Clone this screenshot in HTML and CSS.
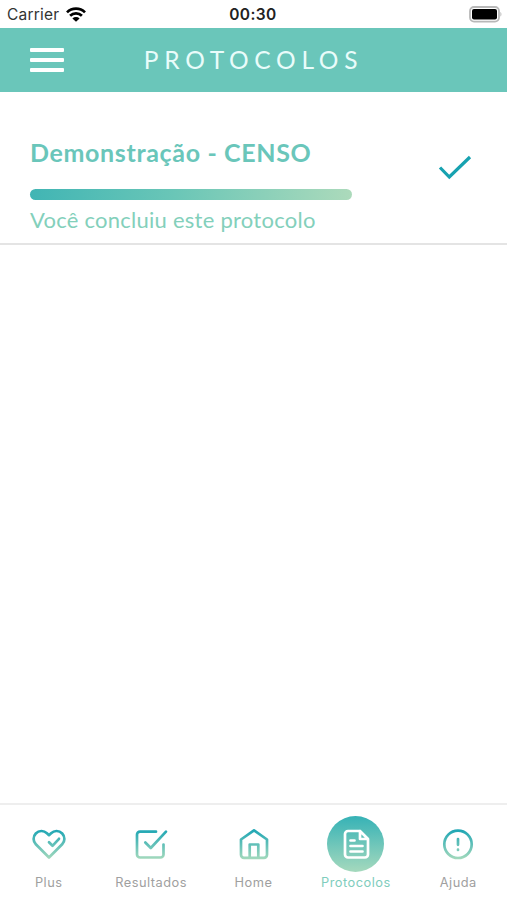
FILE: index.html
```html
<!DOCTYPE html>
<html lang="pt-BR">
<head>
    <meta charset="UTF-8">
    <meta name="viewport" content="width=device-width, initial-scale=1.0">
    <title>Protocolos</title>
    <link rel="stylesheet" href="styles.css">
</head>
<body>
    <div class="status-bar">
        <div class="carrier">
            <span>Carrier</span>
            <svg width="20" height="15" viewBox="0 0 20 15">
                <path d="M1 5.4a12.8 12.8 0 0 1 18 0M4.1 8.8a8.4 8.4 0 0 1 11.8 0" fill="none" stroke="#000" stroke-width="2.7"/>
                <path d="M6.4 11.4a5.1 5.1 0 0 1 7.2 0L10 14.8z" fill="#000"/>
            </svg>
        </div>
        <div class="clock">00:30</div>
        <svg class="battery" width="33" height="17" viewBox="0 0 33 17">
            <rect x="1" y="1" width="29" height="14.6" rx="4" fill="#fff" stroke="#b8b8b8" stroke-width="1.8"/>
            <rect x="3" y="3" width="25" height="10.6" rx="2" fill="#000"/>
            <path d="M31.4 6v4.6c1.4-.6 1.4-4 0-4.6z" fill="#b8b8b8"/>
        </svg>
    </div>

    <header class="header">
        <button class="menu" type="button" aria-label="Menu">
            <span></span>
            <span></span>
            <span></span>
        </button>
        <h1>PROTOCOLOS</h1>
    </header>

    <main class="content">
        <div class="protocol">
            <div class="protocol-info">
                <h2>Demonstração - CENSO</h2>
                <div class="progress"></div>
                <p>Você concluiu este protocolo</p>
            </div>
            <svg class="check" width="34" height="26" viewBox="0 0 34 26">
                <path d="M2 12.5l9.3 9.5L32 2" fill="none" stroke="#17a2b0" stroke-width="3.2"/>
            </svg>
        </div>
    </main>

    <nav class="tabs">
        <svg class="defs" width="0" height="0">
            <linearGradient id="tabGradient" gradientUnits="userSpaceOnUse" x1="0" y1="2" x2="0" y2="32">
                <stop offset="0" stop-color="#1ba5b4"/>
                <stop offset="1" stop-color="#a3d9bc"/>
            </linearGradient>
        </svg>
        <a class="tab">
            <span class="tab-icon">
                <svg width="34" height="34" viewBox="0 0 34 34">
                    <path d="M17 30.5L3.8 17.3a7.8 7.8 0 0 1 0-10.8c3.2-3.3 8-3.2 11.1-.3L17 8.2l2.100-2c3.100-2.900 7.900-3 11.100.3a7.800 7.800 0 0 1 0 10.800z"/>
                    <path d="M17 15.300l3.500 3.500 6.500-7"/>
                </svg>
            </span>
            <span class="tab-label">Plus</span>
        </a>
        <a class="tab">
            <span class="tab-icon">
                <svg width="34" height="34" viewBox="0 0 34 34">
                    <path d="M22 4.700H6a3 3 0 0 0-3 3V27.500a3 3 0 0 0 3 3h20.500a3 3 0 0 0 3-3V17.500"/>
                    <path d="M11.300 15.500l5.500 5.500L32 4.700"/>
                </svg>
            </span>
            <span class="tab-label">Resultados</span>
        </a>
        <a class="tab">
            <span class="tab-icon">
                <svg width="34" height="34" viewBox="0 0 34 34">
                    <path d="M4 12.5L17 3.3l13 9.2V27.800a3 3 0 0 1-3 3H7a3 3 0 0 1-3-3z"/>
                    <path d="M12.700 30.500V17.500h8.600v13"/>
                </svg>
            </span>
            <span class="tab-label">Home</span>
        </a>
        <a class="tab active">
            <span class="tab-icon">
                <svg width="34" height="34" viewBox="0 0 34 34">
                    <path d="M21 4H9a3 3 0 0 0-3 3v20.500a3 3 0 0 0 3 3h17a3 3 0 0 0 3-3V12L21 4v8h8"/>
                    <path d="M11.500 13.500h4M11.500 19h12M11.500 24.500h12"/>
                </svg>
            </span>
            <span class="tab-label">Protocolos</span>
        </a>
        <a class="tab">
            <span class="tab-icon">
                <svg width="34" height="34" viewBox="0 0 34 34">
                    <circle cx="17" cy="17.300" r="13.700"/>
                    <path d="M17 12v5.800M17 22.700v.3"/>
                </svg>
            </span>
            <span class="tab-label">Ajuda</span>
        </a>
    </nav>
</body>
</html>
```
FILE: styles.css
```css
* {
    box-sizing: border-box;
}
body {
    margin: 0;
    height: 100vh;
    display: flex;
    flex-direction: column;
    overflow: hidden;
    background: #fff;
    font-family: Lato, sans-serif;
}
h1, h2, p {
    margin: 0;
}

/* Status bar */
.status-bar {
    height: 28px;
    padding: 1px 5px 0 7px;
    display: grid;
    grid-template-columns: 1fr auto 1fr;
    align-items: center;
    font-family: Inter, sans-serif;
    font-size: 15.5px;
    color: #333;
}
.carrier {
    display: flex;
    align-items: center;
    gap: 7px;
    letter-spacing: 0.2px;
}
.clock {
    padding-right: 3px;
    font-weight: 600;
    letter-spacing: 0.4px;
    color: #222;
}
.battery {
    justify-self: end;
}

/* Header */
.header {
    height: 64px;
    padding: 0 30px;
    display: grid;
    grid-template-columns: 34px 1fr 34px;
    align-items: center;
    background: #6ac6ba;
}
.menu {
    padding: 0;
    border: none;
    background: none;
    display: flex;
    flex-direction: column;
    gap: 6px;
}
.menu span {
    height: 4px;
    border-radius: 1px;
    background: #fff;
}
h1 {
    padding-bottom: 2px;
    text-align: center;
    font-size: 24.5px;
    font-weight: 400;
    letter-spacing: 5.7px;
    color: #e9fcfa;
}

/* Protocol row */
.content {
    flex: 1;
}
.protocol {
    height: 153px;
    padding: 45px 35px 0 30px;
    display: flex;
    justify-content: space-between;
    border-bottom: 2px solid #e4e4e4;
}
.protocol-info {
    width: 322px;
    white-space: nowrap;
}
h2 {
    height: 52px;
    line-height: 30px;
    font-size: 25px;
    font-weight: 700;
    letter-spacing: 0.65px;
    color: #6ac6ba;
}
.progress {
    height: 11px;
    border-radius: 6px;
    background: linear-gradient(90deg, #41b5b4, #6ac6b7 45%, #acdabb);
}
.protocol p {
    margin-top: 4px;
    line-height: 31px;
    font-size: 22px;
    letter-spacing: 0.25px;
    color: #83d0bb;
}
.check {
    margin-top: 18px;
}

/* Bottom tabs */
.tabs {
    height: 97px;
    padding-top: 11px;
    display: flex;
    justify-content: center;
    border-top: 2px solid #eee;
}
.defs {
    position: absolute;
}
.tab {
    flex: 0 0 102.4px;
    display: flex;
    flex-direction: column;
    align-items: center;
}
.tab-icon {
    width: 57px;
    height: 56px;
    display: flex;
    align-items: center;
    justify-content: center;
    border-radius: 50%;
}
.tab-icon svg {
    fill: none;
    stroke: url(#tabGradient);
    stroke-width: 2.7;
    stroke-linecap: round;
    stroke-linejoin: round;
}
.active .tab-icon {
    background: linear-gradient(#36b2b6, #a5d9bd);
}
.active .tab-icon svg {
    stroke: #fff;
}
.tab-label {
    line-height: 21px;
    font-family: Inter, sans-serif;
    font-size: 12.8px;
    letter-spacing: 0.5px;
    color: #a0a0a0;
}
.active .tab-label {
    color: #7fcdbd;
}
```
